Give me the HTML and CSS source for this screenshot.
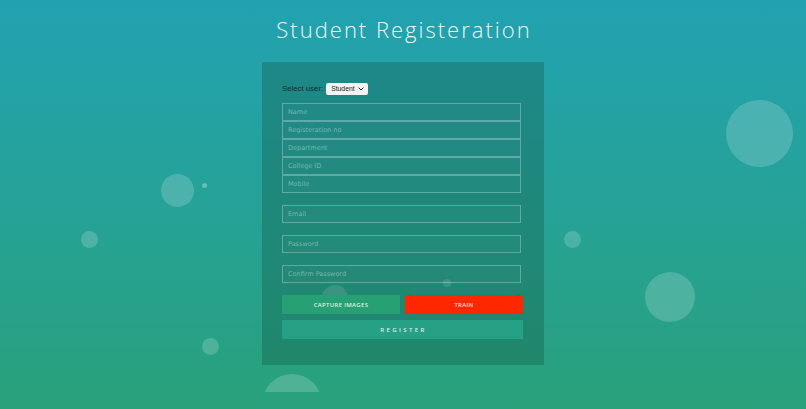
FILE: index.html
```html
<!DOCTYPE html>
<html>
<head>
<meta charset="utf-8">
<link rel="stylesheet" href="styles.css">
</head>
<body>
<div class="page">
  <ul class="bubbles">
    <li class="b b1"></li>
    <li class="b b2"></li>
    <li class="b b3"></li>
    <li class="b b4"></li>
    <li class="b b5"></li>
    <li class="b b6"></li>
    <li class="b b7"></li>
    <li class="b b8"></li>
    <li class="b b9"></li>
    <li class="b b10"></li>
  </ul>
  <main class="content">
    <h1 class="title">Student Registeration</h1>
    <form class="panel">
      <div class="select-row">
        <label class="select-label">Select user:</label>
        <span class="select-box">Student
          <svg class="chev" width="6" height="4" viewBox="0 0 6 4"><path d="M0.6 0.6 L3 3 L5.4 0.6" fill="none" stroke="#222" stroke-width="1"/></svg>
        </span>
      </div>
      <div class="group">
        <input class="field" placeholder="Name">
        <input class="field" placeholder="Registeration no">
        <input class="field" placeholder="Department">
        <input class="field" placeholder="College ID">
        <input class="field" placeholder="Mobile">
      </div>
      <input class="field single" placeholder="Email">
      <input class="field single" placeholder="Password">
      <input class="field single" placeholder="Confirm Password">
      <div class="btn-row">
        <button type="button" class="btn capture">CAPTURE IMAGES</button>
        <button type="button" class="btn train">TRAIN</button>
      </div>
      <button type="button" class="btn register">REGISTER</button>
    </form>
  </main>
</div>
</body>
</html>
```
FILE: styles.css
```css
html, body {
  margin: 0;
  padding: 0;
}
body {
  width: 806px;
  height: 409px;
  overflow: hidden;
  background: linear-gradient(to bottom, #22a2b1 0%, #26a295 55%, #29a17b 100%);
  font-family: "DejaVu Sans", sans-serif;
}
.page {
  position: relative;
  width: 806px;
  height: 409px;
}
.bubbles {
  position: absolute;
  left: 0;
  top: 0;
  width: 806px;
  height: 392px;
  margin: 0;
  padding: 0;
  list-style: none;
  overflow: hidden;
  z-index: 0;
}
.b {
  position: absolute;
  border-radius: 50%;
  background: rgba(255, 255, 255, 0.18);
}
.b1 { left: 726px; top: 100px; width: 67px; height: 67px; }
.b2 { left: 161px; top: 174px; width: 33px; height: 33px; }
.b3 { left: 202px; top: 183px; width: 5px; height: 5px; background: rgba(255,255,255,0.3); }
.b4 { left: 81px; top: 231px; width: 17px; height: 17px; }
.b5 { left: 564px; top: 231px; width: 17px; height: 17px; }
.b6 { left: 645px; top: 272px; width: 50px; height: 50px; }
.b7 { left: 202px; top: 338px; width: 17px; height: 17px; }
.b8 { left: 262px; top: 374px; width: 60px; height: 60px; }
.b9 { left: 322px; top: 285px; width: 26px; height: 26px; }
.b10 { left: 443px; top: 279px; width: 8px; height: 8px; }

.content {
  position: relative;
  z-index: 1;
  display: flex;
  flex-direction: column;
  align-items: center;
}
.title {
  margin: 15px 0 0 0;
  height: 47px;
  font-family: "Open Sans", sans-serif;
  font-weight: 300;
  font-size: 22px;
  line-height: 28px;
  letter-spacing: 2px;
  color: #eaf6f6;
  padding-left: 2px;
}
.panel {
  width: 282px;
  box-sizing: border-box;
  padding: 20px 20px 26px 20px;
  background: rgba(16, 70, 50, 0.28);
  display: flex;
  flex-direction: column;
}
.select-row {
  display: flex;
  align-items: center;
  height: 13px;
  gap: 3px;
}
.select-label {
  font-family: "Liberation Sans", sans-serif;
  font-size: 7.8px;
  color: #0f2e2c;
}
.select-box {
  display: flex;
  align-items: center;
  gap: 3px;
  height: 12px;
  padding: 0 4px 0 5px;
  background: #f3f3f3;
  border-radius: 2px;
  font-family: "Liberation Sans", sans-serif;
  font-size: 6.8px;
  color: #222;
}
.chev {
  display: block;
}
.group {
  margin-top: 8px;
  display: flex;
  flex-direction: column;
}
.field {
  width: 239px;
  height: 18px;
  box-sizing: border-box;
  margin: 0;
  padding: 0 0 0 5px;
  background: rgba(255, 255, 255, 0.02);
  border: 1px solid rgba(255, 255, 255, 0.28);
  font-family: "DejaVu Sans", sans-serif;
  font-size: 6.5px;
  color: #fff;
  outline: none;
}
.field::placeholder {
  color: rgba(255, 255, 255, 0.38);
}
.single {
  margin-top: 12px;
}
.btn-row {
  margin-top: 12px;
  display: flex;
  gap: 5px;
}
.btn {
  height: 19px;
  border: none;
  margin: 0;
  padding: 0;
  font-family: "Open Sans", sans-serif;
  font-weight: 600;
  font-size: 6px;
  color: rgba(255, 255, 255, 0.85);
  letter-spacing: 0.3px;
}
.capture {
  width: 118px;
  background: #27a174;
}
.train {
  width: 118px;
  background: #ff2700;
}
.register {
  margin-top: 6px;
  width: 241px;
  background: #26a185;
  letter-spacing: 2.4px;
  padding-left: 2px;
}
```
